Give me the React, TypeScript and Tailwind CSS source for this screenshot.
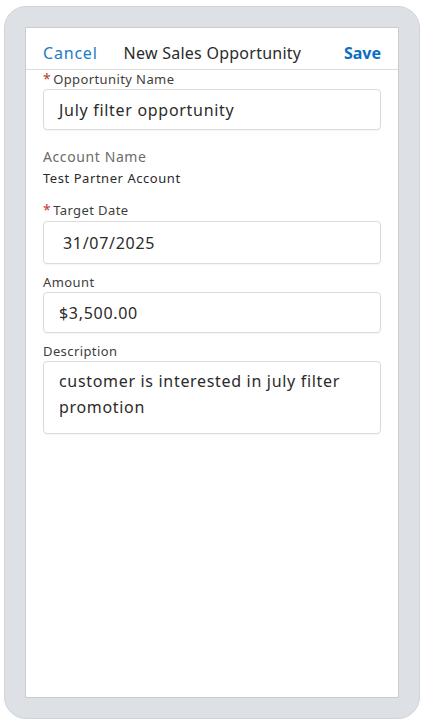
import React from 'react';

const font = { fontFamily: '"Noto Sans", "Open Sans", Arial, sans-serif' };

const Label: React.FC<{ text: string; required?: boolean }> = ({ text, required }) => (
  <div className="flex items-center h-[16px] text-[13px] text-[#3e3e3c] leading-none tracking-[0.4px]">
    {required && <span className="text-[#c23934] mr-[2px] text-[14px]">*</span>}
    <span>{text}</span>
  </div>
);

const Field: React.FC<{ value: string; className?: string; indent?: string }> = ({ value, className = 'h-[41px] mt-[2px]', indent = 'pl-[15px]' }) => (
  <div className={`border border-[#dddbda] rounded-[4px] bg-white shadow-[0_1px_1px_rgba(0,0,0,0.04)] flex items-center ${indent} text-[16px] tracking-[0.7px] text-[#2b2b2b] ${className}`}>
    {value}
  </div>
);

const App: React.FC = () => {
  return (
    <div className="min-h-screen bg-white pl-[4px] pt-[6px]" style={font}>
      <div className="w-[416px] h-[713px] rounded-[22px] bg-[#dde1e6] border border-[#d0d4d9] p-[20px]">
        <div className="h-full bg-white border border-[#c8ccd1] flex flex-col">
          <div className="h-[42px] border-b border-[#dcdcdc] flex items-center px-[17px] pt-[8px]">
            <span className="text-[#1b7dc4] text-[16px] tracking-[0.8px]">Cancel</span>
            <span className="ml-[26px] text-[#2b2b2b] text-[16px] tracking-[0.25px]">New Sales Opportunity</span>
            <span className="ml-auto text-[#0b6ec4] text-[16px] font-bold">Save</span>
          </div>
          <div className="px-[17px] pt-[1px]">
            <Label text="Opportunity Name" required />
            <Field value="July filter opportunity" />

            <div className="mt-[17px] text-[14px] text-[#6b6b6b] leading-[20px] tracking-[0.6px]">Account Name</div>
            <div className="mt-[2px] text-[13px] text-[#2b2b2b] leading-[18px] tracking-[0.55px]">Test Partner Account</div>

            <div className="mt-[15px]">
              <Label text="Target Date" required />
            </div>
            <Field value="31/07/2025" className="h-[43px] mt-[3px]" indent="pl-[19px]" />

            <div className="mt-[10px]">
              <Label text="Amount" />
            </div>
            <Field value="$3,500.00" />

            <div className="mt-[10px]">
              <Label text="Description" />
            </div>
            <div className="mt-[2px] h-[73px] border border-[#dddbda] rounded-[4px] shadow-[0_1px_1px_rgba(0,0,0,0.04)] pl-[15px] pr-[20px] pt-[6px] text-[16px] leading-[26px] tracking-[0.68px] text-[#2b2b2b]">
              customer is interested in july filter promotion
            </div>
          </div>
        </div>
      </div>
    </div>
  );
};

export default App;
